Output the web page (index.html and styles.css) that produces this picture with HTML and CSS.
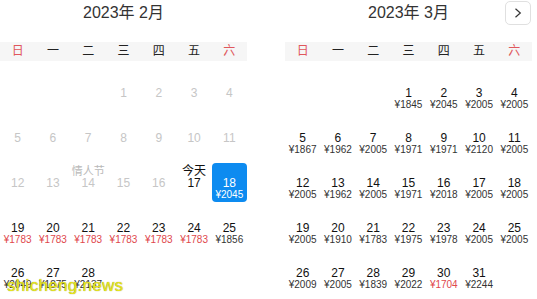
FILE: index.html
```html
<!DOCTYPE html>
<html lang="zh-CN">
<head>
<meta charset="utf-8">
<title>日历</title>
<link rel="stylesheet" href="styles.css">
</head>
<body>
<div class="wrap">
  <section class="cal">
    <div class="cal-head"><span></span><h2 class="title">2023年 2月</h2><span></span></div>
    <div class="week"><span class="we">日</span><span>一</span><span>二</span><span>三</span><span>四</span><span>五</span><span class="we">六</span></div>
    <div class="days">
      <div class="day empty"></div><div class="day empty"></div><div class="day empty"></div>
      <div class="day off"><span class="tag"></span><span class="num">1</span></div>
      <div class="day off"><span class="tag"></span><span class="num">2</span></div>
      <div class="day off"><span class="tag"></span><span class="num">3</span></div>
      <div class="day off"><span class="tag"></span><span class="num">4</span></div>
      <div class="day off"><span class="tag"></span><span class="num">5</span></div>
      <div class="day off"><span class="tag"></span><span class="num">6</span></div>
      <div class="day off"><span class="tag"></span><span class="num">7</span></div>
      <div class="day off"><span class="tag"></span><span class="num">8</span></div>
      <div class="day off"><span class="tag"></span><span class="num">9</span></div>
      <div class="day off"><span class="tag"></span><span class="num">10</span></div>
      <div class="day off"><span class="tag"></span><span class="num">11</span></div>
      <div class="day off"><span class="tag"></span><span class="num">12</span></div>
      <div class="day off"><span class="tag"></span><span class="num">13</span></div>
      <div class="day off"><span class="tag">情人节</span><span class="num">14</span></div>
      <div class="day off"><span class="tag"></span><span class="num">15</span></div>
      <div class="day off"><span class="tag"></span><span class="num">16</span></div>
      <div class="day today"><span class="tag">今天</span><span class="num">17</span></div>
      <div class="day sel"><span class="tag"></span><span class="num">18</span><span class="price">¥2045</span></div>
      <div class="day"><span class="tag"></span><span class="num">19</span><span class="price low">¥1783</span></div>
      <div class="day"><span class="tag"></span><span class="num">20</span><span class="price low">¥1783</span></div>
      <div class="day"><span class="tag"></span><span class="num">21</span><span class="price low">¥1783</span></div>
      <div class="day"><span class="tag"></span><span class="num">22</span><span class="price low">¥1783</span></div>
      <div class="day"><span class="tag"></span><span class="num">23</span><span class="price low">¥1783</span></div>
      <div class="day"><span class="tag"></span><span class="num">24</span><span class="price low">¥1783</span></div>
      <div class="day"><span class="tag"></span><span class="num">25</span><span class="price">¥1856</span></div>
      <div class="day"><span class="tag"></span><span class="num">26</span><span class="price">¥2049</span></div>
      <div class="day"><span class="tag"></span><span class="num">27</span><span class="price">¥1875</span></div>
      <div class="day"><span class="tag"></span><span class="num">28</span><span class="price">¥2137</span></div>
    </div>
  </section>

  <section class="cal">
    <div class="cal-head"><span></span><h2 class="title">2023年 3月</h2>
      <button class="next" type="button" aria-label="下个月"><svg width="8" height="10" viewBox="0 0 8 10"><path d="M1.5 0.8 L6.3 5 L1.5 9.2" fill="none" stroke="#333" stroke-width="1.2"/></svg></button>
    </div>
    <div class="week"><span class="we">日</span><span>一</span><span>二</span><span>三</span><span>四</span><span>五</span><span class="we">六</span></div>
    <div class="days">
      <div class="day empty"></div><div class="day empty"></div><div class="day empty"></div>
      <div class="day"><span class="tag"></span><span class="num">1</span><span class="price">¥1845</span></div>
      <div class="day"><span class="tag"></span><span class="num">2</span><span class="price">¥2045</span></div>
      <div class="day"><span class="tag"></span><span class="num">3</span><span class="price">¥2005</span></div>
      <div class="day"><span class="tag"></span><span class="num">4</span><span class="price">¥2005</span></div>
      <div class="day"><span class="tag"></span><span class="num">5</span><span class="price">¥1867</span></div>
      <div class="day"><span class="tag"></span><span class="num">6</span><span class="price">¥1962</span></div>
      <div class="day"><span class="tag"></span><span class="num">7</span><span class="price">¥2005</span></div>
      <div class="day"><span class="tag"></span><span class="num">8</span><span class="price">¥1971</span></div>
      <div class="day"><span class="tag"></span><span class="num">9</span><span class="price">¥1971</span></div>
      <div class="day"><span class="tag"></span><span class="num">10</span><span class="price">¥2120</span></div>
      <div class="day"><span class="tag"></span><span class="num">11</span><span class="price">¥2005</span></div>
      <div class="day"><span class="tag"></span><span class="num">12</span><span class="price">¥2005</span></div>
      <div class="day"><span class="tag"></span><span class="num">13</span><span class="price">¥1962</span></div>
      <div class="day"><span class="tag"></span><span class="num">14</span><span class="price">¥2005</span></div>
      <div class="day"><span class="tag"></span><span class="num">15</span><span class="price">¥1971</span></div>
      <div class="day"><span class="tag"></span><span class="num">16</span><span class="price">¥2018</span></div>
      <div class="day"><span class="tag"></span><span class="num">17</span><span class="price">¥2005</span></div>
      <div class="day"><span class="tag"></span><span class="num">18</span><span class="price">¥2005</span></div>
      <div class="day"><span class="tag"></span><span class="num">19</span><span class="price">¥2005</span></div>
      <div class="day"><span class="tag"></span><span class="num">20</span><span class="price">¥1910</span></div>
      <div class="day"><span class="tag"></span><span class="num">21</span><span class="price">¥1783</span></div>
      <div class="day"><span class="tag"></span><span class="num">22</span><span class="price">¥1975</span></div>
      <div class="day"><span class="tag"></span><span class="num">23</span><span class="price">¥1978</span></div>
      <div class="day"><span class="tag"></span><span class="num">24</span><span class="price">¥2005</span></div>
      <div class="day"><span class="tag"></span><span class="num">25</span><span class="price">¥2005</span></div>
      <div class="day"><span class="tag"></span><span class="num">26</span><span class="price">¥2009</span></div>
      <div class="day"><span class="tag"></span><span class="num">27</span><span class="price">¥2005</span></div>
      <div class="day"><span class="tag"></span><span class="num">28</span><span class="price">¥1839</span></div>
      <div class="day"><span class="tag"></span><span class="num">29</span><span class="price">¥2022</span></div>
      <div class="day"><span class="tag"></span><span class="num">30</span><span class="price low">¥1704</span></div>
      <div class="day"><span class="tag"></span><span class="num">31</span><span class="price">¥2244</span></div>
    </div>
  </section>
</div>
<div class="watermark">shicheng.news</div>
</body>
</html>
```

FILE: styles.css
```css
* { box-sizing: border-box; }

html, body {
  margin: 0;
  padding: 0;
  background: #ffffff;
}

body {
  width: 537px;
  height: 299px;
  overflow: hidden;
  position: relative;
  font-family: "Liberation Sans", "Noto Sans CJK SC", sans-serif;
  color: #222;
}

.wrap {
  display: flex;
  gap: 38px;
}

.cal {
  width: 247px;
  flex: none;
}

.cal-head {
  height: 26px;
  display: grid;
  grid-template-columns: 1fr auto 1fr;
  align-items: center;
}

.title {
  margin: 0;
  font-size: 16px;
  font-weight: normal;
  color: #333;
  line-height: 26px;
  white-space: nowrap;
}

.next {
  justify-self: end;
  margin-right: 1px;
  width: 26px;
  height: 24px;
  padding: 0;
  border: 1px solid #e0e0e0;
  border-radius: 5px;
  background: #fff;
  display: flex;
  align-items: center;
  justify-content: center;
}

.next svg { display: block; }

.week {
  margin-top: 16px;
  height: 19px;
  background: #f6f6f6;
  display: grid;
  grid-template-columns: repeat(7, 1fr);
  font-size: 12px;
  line-height: 19px;
  text-align: center;
  color: #222;
}

.week .we { color: #e0575c; }

.days {
  margin-top: 9px;
  display: grid;
  grid-template-columns: repeat(7, 1fr);
  grid-auto-rows: 45px;
}

.day {
  margin: 3px 0;
  height: 39px;
  padding-top: 2px;
  display: flex;
  flex-direction: column;
  align-items: center;
  text-align: center;
  border-radius: 4px;
  white-space: nowrap;
}

.tag {
  height: 12px;
  font-size: 12px;
  line-height: 12px;
  color: #111;
}

.num {
  height: 12px;
  font-size: 12px;
  line-height: 12px;
  color: #111;
}

.price {
  height: 12px;
  font-size: 10px;
  line-height: 12px;
  color: #333;
}

.price.low { color: #e0474c; }

.day.off .num { color: #c6c6c6; }
.day.off .tag { color: #b9b9b9; font-size: 11px; }

.day.sel {
  background: #0d8bf0;
}

.day.sel .num,
.day.sel .price { color: #fff; }

.watermark {
  position: absolute;
  left: 7px;
  top: 277px;
  font-family: "Liberation Sans", sans-serif;
  font-size: 17px;
  line-height: 17px;
  letter-spacing: 0.3px;
  color: #e6e41c;
  text-shadow: 0 0 1px #8c8a10;
}
```
